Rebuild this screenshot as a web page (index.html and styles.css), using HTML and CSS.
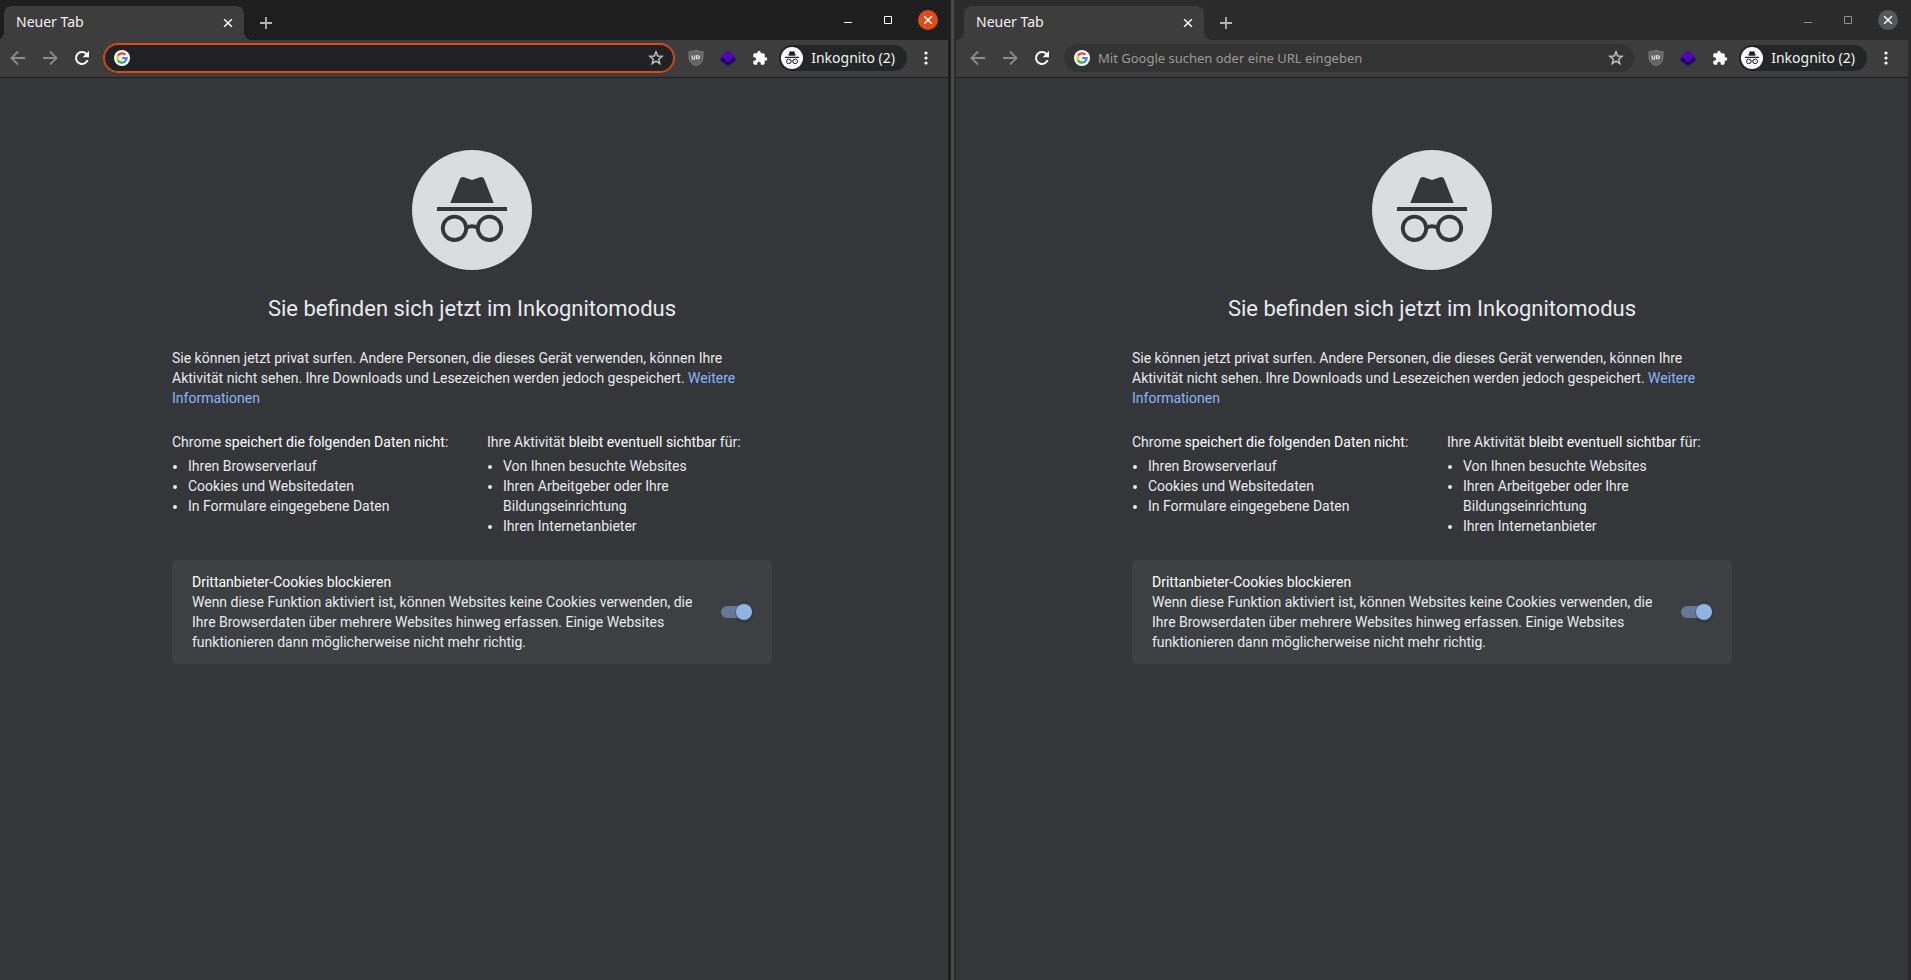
FILE: index.html
```html
<!DOCTYPE html>
<html lang="de">
<head>
<meta charset="utf-8">
<meta name="viewport" content="width=device-width, initial-scale=1">
<title>Neuer Tab</title>
<link rel="stylesheet" href="styles.css">
</head>
<body>
<svg class="sprite" aria-hidden="true">
  <symbol id="i-back" viewBox="0 0 16 16"><path d="M15 8H2M8 1.500 1.500 8 8 14.500" fill="none" stroke="currentColor" stroke-width="1.800"/></symbol>
  <symbol id="i-forward" viewBox="0 0 16 16"><path d="M1 8h13M8 1.500 14.500 8 8 14.500" fill="none" stroke="currentColor" stroke-width="1.800"/></symbol>
  <symbol id="i-reload" viewBox="0 0 16 16"><path d="M13.600 10.200A6 6 0 1 1 12.200 3.700L13.400 5" fill="none" stroke="currentColor" stroke-width="2"/><path d="M15 .8v6.400H8.600z" fill="currentColor"/></symbol>
  <symbol id="i-x" viewBox="0 0 10 10"><path d="M1.200 1.200l7.600 7.600M8.800 1.200 1.200 8.800" fill="none" stroke="currentColor" stroke-width="1.500"/></symbol>
  <symbol id="i-plus" viewBox="0 0 12 12"><path d="M6 0v12M0 6h12" fill="none" stroke="currentColor" stroke-width="1.800"/></symbol>
  <symbol id="i-min" viewBox="0 0 8 8"><path d="M0 6.500h8" stroke="currentColor"/></symbol>
  <symbol id="i-max" viewBox="0 0 8 8"><path d="M.5.5h7v7h-7z" fill="none" stroke="currentColor"/></symbol>
  <symbol id="i-google" viewBox="0 0 16 16">
    <circle cx="8" cy="8" r="8" fill="#fff"/>
    <g fill="none" stroke-width="2.300">
      <path d="M4.050 5.600A4.650 4.650 0 0 1 11.400 4.800" stroke="#ea4335"/>
      <path d="M4 10.300A4.650 4.650 0 0 1 4 5.700" stroke="#fbbc05"/>
      <path d="M11.300 11.300A4.650 4.650 0 0 1 3.950 10.200" stroke="#34a853"/>
      <path d="M8.200 8.100h4.450A4.650 4.650 0 0 1 11.100 11.500" stroke="#4285f4"/>
    </g>
  </symbol>
  <symbol id="i-star" viewBox="0 0 16 16"><path d="M8 1.900l1.650 4.150 4.500.3-3.450 2.850 1.100 4.300L8 11.100l-3.800 2.400 1.100-4.300L1.850 6.350l4.500-.3z" fill="none" stroke="currentColor" stroke-width="1.500"/></symbol>
  <symbol id="i-shield" viewBox="0 0 16 16">
    <path d="M8 0c2 1.200 4.500 1.600 7 1.600v5.900c0 4-2.500 6.500-7 8.500-4.500-2-7-4.500-7-8.500V1.600C3.500 1.600 6 1.200 8 0z" fill="#656565" stroke="#858585" stroke-width=".8"/>
    <path d="M4.200 5.400v2.600q0 1.200 1.300 1.200t1.300-1.200V5.400M8.700 5.800v3h1q1.800 0 1.800-1.500T9.700 5.800z" fill="none" stroke="#f4f4f4" stroke-width="1.100"/>
  </symbol>
  <symbol id="i-layers" viewBox="0 0 16 16">
    <path d="M2 7.500 0 10 8 16l8-6-2-2.500z" fill="#1c006b"/>
    <path d="M8 0l7.500 6.200L8 12.400.5 6.200z" fill="#4a0bb0"/>
  </symbol>
  <symbol id="i-puzzle" viewBox="0 0 24 24"><path fill="currentColor" d="M20.500 11H19V7c0-1.100-.9-2-2-2h-4V3.500a2.500 2.500 0 0 0-5 0V5H4c-1.100 0-2 .9-2 2v3.800h1.500a2.700 2.700 0 0 1 0 5.400H2V20c0 1.100.9 2 2 2h3.800v-1.500a2.700 2.700 0 0 1 5.400 0V22H17c1.100 0 2-.9 2-2v-4h1.500a2.500 2.500 0 0 0 0-5z"/></symbol>
  <symbol id="i-dots" viewBox="0 0 4 14"><g fill="currentColor"><circle cx="2" cy="2" r="1.600"/><circle cx="2" cy="7" r="1.600"/><circle cx="2" cy="12" r="1.600"/></g></symbol>
  <symbol id="i-incognito" viewBox="0 0 120 120">
    <circle cx="60" cy="60" r="60" fill="currentColor"/>
    <path d="M38.300 53 47.800 29Q49.200 26.200 52 27.200L60 30l8-2.800Q70.800 26.200 72.200 29L81.700 53zM25 57h70v4H25z" fill="#35363a"/>
    <g fill="none" stroke="#35363a" stroke-width="3.800"><circle cx="42.500" cy="78.300" r="11.700"/><circle cx="77.500" cy="78.300" r="11.700"/><path d="M54.200 78Q60 74.500 65.800 78"/></g>
  </symbol>
  <symbol id="i-profile" viewBox="0 0 22 22">
    <circle cx="11" cy="11" r="11" fill="#fff"/>
    <path d="M7.300 8.800 8.600 4.800Q8.900 4 9.700 4.200L11 4.600l1.300-.4q.8-.2 1.100.6l1.300 4zM4 9.800h14v1.100H4z" fill="#202124"/>
    <g fill="none" stroke="#202124" stroke-width="1"><circle cx="7.800" cy="14.400" r="2.300"/><circle cx="14.200" cy="14.400" r="2.300"/><path d="M10.100 14.300q.9-.6 1.800 0"/></g>
  </symbol>
</svg>

<div class="desktop">
  <section class="window window-active" aria-label="Linkes Fenster">
    <header class="tabstrip">
      <div class="tab"><span class="tab-title">Neuer Tab</span><button class="icon-btn tab-close" aria-label="Tab schließen"><svg><use href="#i-x"/></svg></button></div>
      <button class="icon-btn new-tab" aria-label="Neuer Tab"><svg><use href="#i-plus"/></svg></button>
      <div class="window-controls">
        <button class="icon-btn control" aria-label="Minimieren"><svg><use href="#i-min"/></svg></button>
        <button class="icon-btn control" aria-label="Maximieren"><svg><use href="#i-max"/></svg></button>
        <button class="icon-btn close-window" aria-label="Schließen"><svg><use href="#i-x"/></svg></button>
      </div>
    </header>
    <nav class="toolbar">
      <button class="icon-btn nav-btn muted" aria-label="Zurück"><svg><use href="#i-back"/></svg></button>
      <button class="icon-btn nav-btn muted" aria-label="Vorwärts"><svg><use href="#i-forward"/></svg></button>
      <button class="icon-btn nav-btn" aria-label="Neu laden"><svg><use href="#i-reload"/></svg></button>
      <div class="omnibox">
        <svg><use href="#i-google"/></svg>
        <input type="text" aria-label="Adressleiste">
        <button class="icon-btn star" aria-label="Lesezeichen"><svg><use href="#i-star"/></svg></button>
      </div>
      <button class="icon-btn ext" aria-label="uBlock"><svg><use href="#i-shield"/></svg></button>
      <button class="icon-btn ext" aria-label="Ebenen"><svg><use href="#i-layers"/></svg></button>
      <button class="icon-btn ext" aria-label="Erweiterungen"><svg><use href="#i-puzzle"/></svg></button>
      <button class="profile"><svg><use href="#i-profile"/></svg><span>Inkognito (2)</span></button>
      <button class="icon-btn menu" aria-label="Menü"><svg><use href="#i-dots"/></svg></button>
    </nav>
    <main class="page">
      <div class="content">
        <svg class="hero"><use href="#i-incognito"/></svg>
        <h1>Sie befinden sich jetzt im Inkognitomodus</h1>
        <p class="intro">Sie können jetzt privat surfen. Andere Personen, die dieses Gerät verwenden, können Ihre Aktivität nicht sehen. Ihre Downloads und Lesezeichen werden jedoch gespeichert. <a href="#">Weitere Informationen</a></p>
        <div class="columns">
          <div>
            <p>Chrome <em>speichert die folgenden Daten nicht</em>:</p>
            <ul><li>Ihren Browserverlauf</li><li>Cookies und Websitedaten</li><li>In Formulare eingegebene Daten</li></ul>
          </div>
          <div>
            <p>Ihre Aktivität <em>bleibt eventuell sichtbar</em> für:</p>
            <ul><li>Von Ihnen besuchte Websites</li><li>Ihren Arbeitgeber oder Ihre Bildungseinrichtung</li><li>Ihren Internetanbieter</li></ul>
          </div>
        </div>
        <div class="cookies">
          <label for="block-a"><em>Drittanbieter-Cookies blockieren</em><span>Wenn diese Funktion aktiviert ist, können Websites keine Cookies verwenden, die Ihre Browserdaten über mehrere Websites hinweg erfassen. Einige Websites funktionieren dann möglicherweise nicht mehr richtig.</span></label>
          <input class="toggle" type="checkbox" id="block-a" checked>
        </div>
      </div>
    </main>
  </section>

  <div class="divider"></div>

  <section class="window window-inactive" aria-label="Rechtes Fenster">
    <header class="tabstrip">
      <div class="tab"><span class="tab-title">Neuer Tab</span><button class="icon-btn tab-close" aria-label="Tab schließen"><svg><use href="#i-x"/></svg></button></div>
      <button class="icon-btn new-tab" aria-label="Neuer Tab"><svg><use href="#i-plus"/></svg></button>
      <div class="window-controls">
        <button class="icon-btn control" aria-label="Minimieren"><svg><use href="#i-min"/></svg></button>
        <button class="icon-btn control" aria-label="Maximieren"><svg><use href="#i-max"/></svg></button>
        <button class="icon-btn close-window" aria-label="Schließen"><svg><use href="#i-x"/></svg></button>
      </div>
    </header>
    <nav class="toolbar">
      <button class="icon-btn nav-btn muted" aria-label="Zurück"><svg><use href="#i-back"/></svg></button>
      <button class="icon-btn nav-btn muted" aria-label="Vorwärts"><svg><use href="#i-forward"/></svg></button>
      <button class="icon-btn nav-btn" aria-label="Neu laden"><svg><use href="#i-reload"/></svg></button>
      <div class="omnibox">
        <svg><use href="#i-google"/></svg>
        <input type="text" aria-label="Adressleiste" placeholder="Mit Google suchen oder eine URL eingeben">
        <button class="icon-btn star" aria-label="Lesezeichen"><svg><use href="#i-star"/></svg></button>
      </div>
      <button class="icon-btn ext" aria-label="uBlock"><svg><use href="#i-shield"/></svg></button>
      <button class="icon-btn ext" aria-label="Ebenen"><svg><use href="#i-layers"/></svg></button>
      <button class="icon-btn ext" aria-label="Erweiterungen"><svg><use href="#i-puzzle"/></svg></button>
      <button class="profile"><svg><use href="#i-profile"/></svg><span>Inkognito (2)</span></button>
      <button class="icon-btn menu" aria-label="Menü"><svg><use href="#i-dots"/></svg></button>
    </nav>
    <main class="page">
      <div class="content">
        <svg class="hero"><use href="#i-incognito"/></svg>
        <h1>Sie befinden sich jetzt im Inkognitomodus</h1>
        <p class="intro">Sie können jetzt privat surfen. Andere Personen, die dieses Gerät verwenden, können Ihre Aktivität nicht sehen. Ihre Downloads und Lesezeichen werden jedoch gespeichert. <a href="#">Weitere Informationen</a></p>
        <div class="columns">
          <div>
            <p>Chrome <em>speichert die folgenden Daten nicht</em>:</p>
            <ul><li>Ihren Browserverlauf</li><li>Cookies und Websitedaten</li><li>In Formulare eingegebene Daten</li></ul>
          </div>
          <div>
            <p>Ihre Aktivität <em>bleibt eventuell sichtbar</em> für:</p>
            <ul><li>Von Ihnen besuchte Websites</li><li>Ihren Arbeitgeber oder Ihre Bildungseinrichtung</li><li>Ihren Internetanbieter</li></ul>
          </div>
        </div>
        <div class="cookies">
          <label for="block-b"><em>Drittanbieter-Cookies blockieren</em><span>Wenn diese Funktion aktiviert ist, können Websites keine Cookies verwenden, die Ihre Browserdaten über mehrere Websites hinweg erfassen. Einige Websites funktionieren dann möglicherweise nicht mehr richtig.</span></label>
          <input class="toggle" type="checkbox" id="block-b" checked>
        </div>
      </div>
    </main>
  </section>
</div>
</body>
</html>
```
FILE: styles.css
```css
* { box-sizing: border-box; }

body {
  margin: 0;
  overflow: hidden;
  background: #1e1e1e;
  font-family: "Noto Sans", "Open Sans", sans-serif;
}

button, input { font: inherit; }
em { font-style: normal; color: #fff; }
.sprite { display: none; }

.desktop {
  display: flex;
  min-height: 100vh;
}

.window {
  --frame: #1e1e1e;
  --bar: #3d3d3d;
  box-sizing: content-box;
  flex: 1;
  min-width: 0;
  display: flex;
  flex-direction: column;
  border: 0 solid var(--frame);
  border-right-width: 3px;
}

/* the left window is snapped slightly past the screen edge */
.window-active { margin-left: -4px; }
.window-inactive { --frame: #2b2b2b; border-left-width: 2px; }
.divider { flex: none; width: 3px; background: #4a4a49; }

.icon-btn {
  display: flex;
  align-items: center;
  justify-content: center;
  flex: none;
  padding: 0;
  border: 0;
  background: none;
  color: #fff;
}

/* Tab strip */
.tabstrip {
  display: flex;
  align-items: flex-end;
  height: 40px;
  padding-left: 8px;
  background: var(--frame);
}

.tab {
  position: relative;
  display: flex;
  align-items: center;
  justify-content: space-between;
  width: 240px;
  height: 34px;
  padding: 0 8px 0 12px;
  border-radius: 8px 8px 0 0;
  background: var(--bar);
  color: #f1f1f1;
  font-size: 14px;
  line-height: 18px;
}
.tab-title { padding-bottom: 2px; }

.tab::before, .tab::after {
  content: "";
  position: absolute;
  bottom: 0;
  width: 8px;
  height: 8px;
}
.tab::before { right: 100%; background: radial-gradient(circle at 0 0, transparent 8px, var(--bar) 8px); }
.tab::after { left: 100%; background: radial-gradient(circle at 100% 0, transparent 8px, var(--bar) 8px); }

.tab-close { width: 16px; height: 16px; }
.tab-close svg { width: 10px; height: 10px; }
.new-tab { width: 28px; height: 34px; margin-left: 8px; color: #b4b4b4; }
.new-tab svg { width: 12px; height: 12px; }

.window-controls {
  display: flex;
  align-items: center;
  gap: 20px;
  height: 40px;
  margin-left: auto;
  padding-right: 10px;
}
.control { width: 20px; height: 20px; }
.control svg { width: 8px; height: 8px; }
.close-window { width: 20px; height: 20px; border-radius: 50%; background: #e04a19; }
.close-window svg { width: 10px; height: 10px; }
.window-inactive .control { color: #8e8e8e; }
.window-inactive .close-window { background: #565759; }

/* Toolbar */
.toolbar {
  display: flex;
  align-items: center;
  height: 38px;
  padding: 0 12px 2px 6px;
  border-bottom: 1px solid #1f1f20;
  background: var(--bar);
}
.nav-btn { width: 32px; height: 28px; }
.nav-btn svg { width: 16px; height: 16px; }
.muted { color: #8b8b8b; }

.omnibox {
  flex: 1;
  min-width: 0;
  display: flex;
  align-items: center;
  gap: 8px;
  height: 28px;
  margin: 0 6px;
  padding: 0 10px;
  border-radius: 14px;
  background: #333;
}
.window-active .omnibox {
  background: #202124;
  box-shadow: inset 0 0 0 1px #e04a19, 0 0 0 1px #e04a19;
}
.omnibox > svg { flex: none; width: 16px; height: 16px; }
.omnibox input {
  flex: 1;
  min-width: 0;
  padding: 0;
  border: 0;
  outline: 0;
  background: none;
  color: #fff;
  font-size: 13px;
}
.omnibox input::placeholder { color: #9b9b9b; opacity: 1; }
.star { color: #bdbdbd; }
.star svg { width: 16px; height: 16px; }

.ext { width: 32px; height: 28px; }
.ext svg { width: 16px; height: 16px; }

.profile {
  display: flex;
  align-items: center;
  gap: 8px;
  flex: none;
  height: 26px;
  margin-left: 3px;
  padding: 0 12px 0 2px;
  border: 0;
  border-radius: 13px;
  background: #242527;
  color: #f1f1f1;
  font-size: 14px;
}
.profile svg { flex: none; width: 22px; height: 22px; }
.menu { width: 20px; height: 28px; margin-left: 9px; }
.menu svg { width: 4px; height: 14px; }

/* Incognito page */
.page {
  flex: 1;
  padding: 72px 24px;
  background: #35363a;
  color: #e8eaed;
  font-family: Roboto, sans-serif;
  font-size: 14px;
  line-height: 20px;
}
.content { max-width: 600px; margin: 0 auto; }
.hero { display: block; width: 120px; height: 120px; margin: 0 auto; color: #dadce0; }

h1 {
  margin: 25px 0;
  font-size: 22px;
  font-weight: 400;
  line-height: 28px;
  text-align: center;
}
p { margin: 0; }
a { color: #8ab4f8; text-decoration: none; }

.columns {
  display: grid;
  grid-template-columns: 283px 1fr;
  gap: 32px;
  margin: 24px 0;
}
ul { margin: 4px 0 0; padding-left: 16px; }

.cookies {
  display: flex;
  align-items: center;
  justify-content: space-between;
  gap: 24px;
  padding: 12px 20px;
  border-radius: 4px;
  background: #3c4043;
}
.cookies label { flex: 1; }
.cookies em { display: block; }

.toggle {
  appearance: none;
  flex: none;
  display: flex;
  align-items: center;
  justify-content: flex-end;
  width: 31px;
  height: 12px;
  margin: 0;
  border-radius: 6px;
  background: #667899;
}
.toggle::before {
  content: "";
  width: 16px;
  height: 16px;
  flex: none;
  border-radius: 50%;
  background: #8fb4e0;
  box-shadow: 0 1px 3px rgba(0, 0, 0, .4);
}
```
